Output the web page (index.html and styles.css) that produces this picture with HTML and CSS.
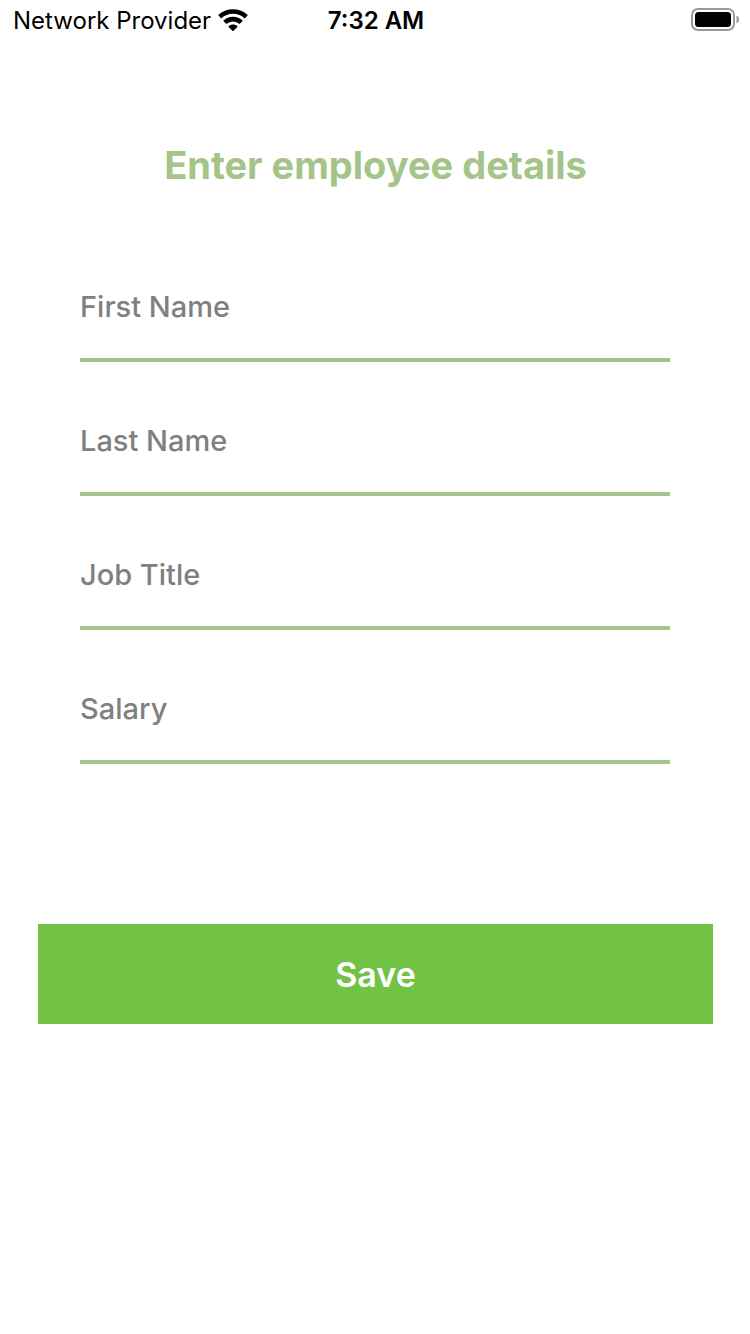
FILE: index.html
```html
<!DOCTYPE html>
<html lang="en">
<head>
<meta charset="utf-8">
<meta name="viewport" content="width=device-width, initial-scale=1">
<title>Employee details</title>
<link rel="stylesheet" href="styles.css">
</head>
<body>
<header class="status">
  <div class="carrier">
    <span>Network Provider</span>
    <svg class="wifi" viewBox="0 0 30 22" aria-hidden="true">
      <path class="wave" d="M1.700 7.700A19.500 19.500 0 0 1 28.300 7.700"/>
      <path class="wave" d="M6.800 13.400A12 12 0 0 1 23.200 13.400"/>
      <path d="M14.400 21.700L10.700 18c-.3-.3-.3-.7 0-1C12 16 13.400 15.500 15 15.500s3 .5 4.300 1.500c.3.300.3.700 0 1l-3.700 3.700c-.4.400-.8.400-1.200 0z"/>
    </svg>
  </div>
  <time class="clock">7:32 AM</time>
  <div class="power">
    <svg class="battery" viewBox="0 0 48 24" aria-hidden="true">
      <rect class="shell" x="1" y="1" width="42" height="21" rx="6"/>
      <rect x="4" y="4" width="36" height="15" rx="3.500"/>
      <path class="tip" d="M45.500 7.500c2 .8 2.500 2.200 2.500 4s-.5 3.200-2.500 4z"/>
    </svg>
  </div>
</header>
<main class="page">
  <h1 class="title">Enter employee details</h1>
  <form class="form">
    <div class="fields">
      <input class="field" type="text" placeholder="First Name" aria-label="First Name">
      <input class="field" type="text" placeholder="Last Name" aria-label="Last Name">
      <input class="field" type="text" placeholder="Job Title" aria-label="Job Title">
      <input class="field" type="text" placeholder="Salary" aria-label="Salary">
    </div>
    <button class="save" type="button">Save</button>
  </form>
</main>
</body>
</html>
```
FILE: styles.css
```css
* { box-sizing: border-box; }
body {
  margin: 0;
  background: #fff;
  color: #000;
  font-family: Inter, "Liberation Sans", sans-serif;
}
.status {
  display: grid;
  grid-template-columns: 1fr auto 1fr;
  align-items: center;
  height: 40px;
  padding: 0 11px 0 13px;
  font-size: 24px;
}
.carrier { display: flex; align-items: center; gap: 7px; white-space: nowrap; }
.wifi { width: 30px; height: 22px; }
.wave { fill: none; stroke: #000; stroke-width: 4.6; }
.clock { font-weight: 600; }
.power { display: flex; justify-content: flex-end; }
.battery { width: 48px; height: 24px; }
.shell { fill: none; stroke: #999; stroke-width: 2; }
.tip { fill: #999; }
.page { padding: 100px 37px 40px 38px; }
.title {
  margin: 0;
  color: #a4c489;
  font-size: 38px;
  font-weight: 700;
  line-height: 50px;
  text-align: center;
}
.form { display: flex; flex-direction: column; }
.fields {
  display: flex;
  flex-direction: column;
  gap: 34px;
  padding: 72px 43px 160px 42px;
}
.field {
  width: 100%;
  height: 100px;
  padding: 0 0 8px;
  border: 0;
  border-bottom: 4px solid #a4c489;
  border-radius: 0;
  outline: none;
  background: transparent;
  color: #000;
  font: 500 29px Inter, "Liberation Sans", sans-serif;
}
.field::placeholder { color: #808080; opacity: 1; }
.save {
  height: 100px;
  padding: 0;
  border: 0;
  background: #72c245;
  color: #fff;
  font: 600 34px Inter, "Liberation Sans", sans-serif;
}
```
